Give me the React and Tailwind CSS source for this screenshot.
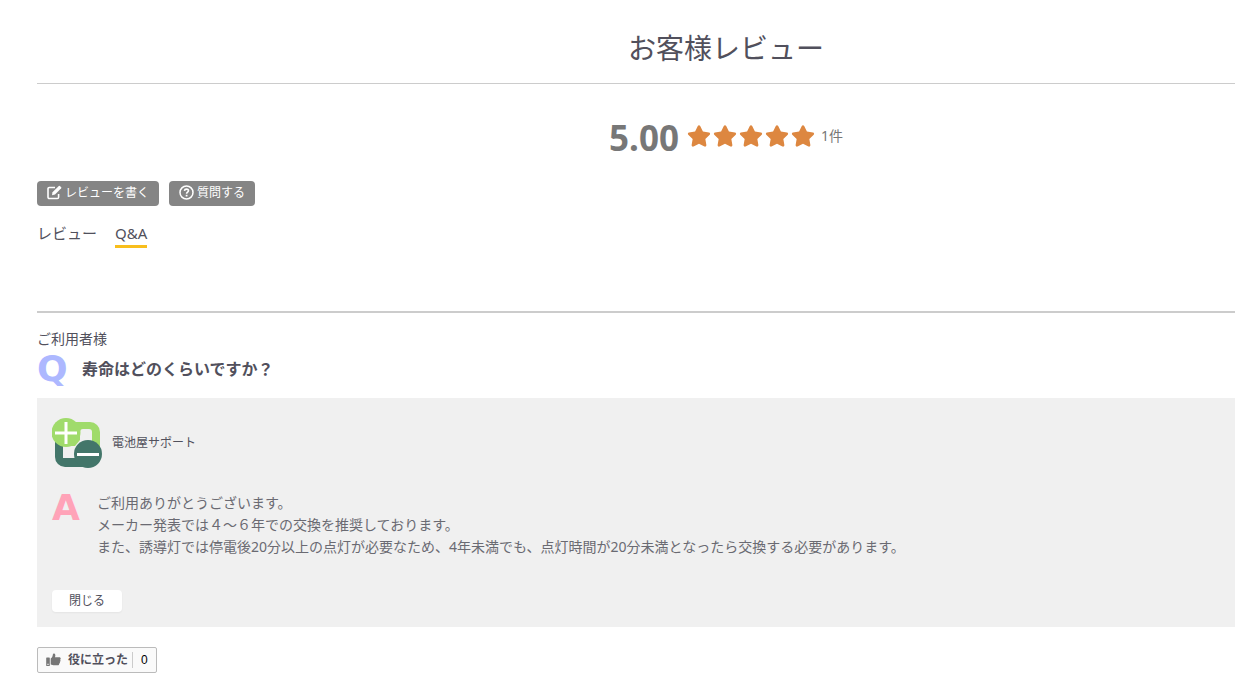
import { FaStar } from 'react-icons/fa';

const tabs = [
  { label: 'レビュー', href: '#review', active: false },
  { label: 'Q&A', href: '#qa', active: true },
];

const answerLines = [
  'ご利用ありがとうございます。',
  'メーカー発表では４～６年での交換を推奨しております。',
  'また、誘導灯では停電後20分以上の点灯が必要なため、4年未満でも、点灯時間が20分未満となったら交換する必要があります。',
];

const EditIcon = () => (
  <svg viewBox="0 0 15 15" className="h-[15px] w-[15px]" fill="none" aria-hidden="true">
    <path d="M8 2.5H2.300a1.300 1.300 0 0 0-1.300 1.300v8.400a1.300 1.300 0 0 0 1.300 1.300h8a1.300 1.300 0 0 0 1.300-1.300V9" stroke="currentColor" strokeWidth="1.600" />
    <path d="M5 10.2l.5-3L11.8.9a.8.8 0 0 1 1.100 0l1.300 1.300a.8.8 0 0 1 0 1.100L8 9.600z" fill="currentColor" />
  </svg>
);

const QuestionIcon = () => (
  <svg viewBox="0 0 15 15" className="h-[15px] w-[15px]" fill="none" aria-hidden="true">
    <circle cx="7.5" cy="7.5" r="6.5" stroke="currentColor" strokeWidth="1.5" />
    <path d="M5.4 5.9c.2-1.2 1-1.8 2.1-1.8s2 .7 2 1.7c0 1.4-1.9 1.4-1.9 2.9" stroke="currentColor" strokeWidth="1.6" />
    <path d="M6.7 9.8h1.8v1.7H6.7z" fill="currentColor" />
  </svg>
);

const ThumbIcon = () => (
  <svg viewBox="0 0 15 14" className="h-[14px] w-[15px] text-[#777]" fill="currentColor" aria-hidden="true">
    <path fillRule="evenodd" d="M.8 4.5h2.4a.6.6 0 0 1 .6.6v7.3a.6.6 0 0 1-.6.6H.8a.6.6 0 0 1-.6-.6V5.1a.6.6 0 0 1 .6-.6zM1.4 10.7v1.2h1.2v-1.2z" />
    <path d="M4.700 5.500C6.200 4.700 6.500 3.500 6.800 1.700 7 .7 7.500.4 8.200.6c1.300.4 1.400 2 .7 3.700h4.300c1.700 0 1.900 1.900.9 2.400.7.7.5 1.800-.3 2.100.4.8.1 1.600-.7 1.900.2.9-.3 1.600-1.400 1.600H8.500c-1.500 0-2.500-.6-3.800-.8z" />
  </svg>
);

const ShopIcon = () => (
  <svg viewBox="0 0 50 50" className="h-[50px] w-[50px]" aria-hidden="true">
    <path d="M14 4h24a10 10 0 0 1 10 10v20H14z" fill="#a0db6b" />
    <path d="M3 22h8v18h20v9H13a10 10 0 0 1-10-10z" fill="#43766a" />
    <path d="M28 14a3 3 0 0 1 3-3h6a3 3 0 0 1 3 3v18H28v8H14a3 3 0 0 1-3-3V28h12l5-6z" fill="#f0f0f0" />
    <circle cx="14" cy="14.5" r="14.5" fill="#a0db6b" />
    <circle cx="36" cy="36" r="14" fill="#43766a" />
    <path d="M14 4v22M3 15h22M25 36.5h22" stroke="#fff" strokeWidth="3" />
  </svg>
);

const ToolButton = ({ icon, children }) => (
  <button type="button" className="flex h-[25px] items-center gap-[3px] rounded-sm bg-[#858585] px-2.5 pb-0.5 text-xs text-white">
    {icon}
    {children}
  </button>
);

const Rating = () => (
  <div className="flex items-center justify-center pl-[180px] text-[#777]">
    <span className="mr-2 text-[35px] leading-10 font-bold">5.00</span>
    <div className="flex gap-0.5 pb-1" role="img" aria-label="5.00">
      {[1, 2, 3, 4, 5].map((n) => (
        <FaStar key={n} className="h-6 w-6 text-[#dd8740]" />
      ))}
    </div>
    <span className="ml-1.5 pb-1 text-sm">1件</span>
  </div>
);

const Answer = () => (
  <div className="bg-[#f0f0f0] px-[15px] pt-5 pb-[15px]">
    <div className="flex items-center gap-2.5">
      <ShopIcon />
      <span className="text-xs">電池屋サポート</span>
    </div>
    <div className="mt-5 flex">
      <span className="w-[45px] shrink-0 font-['DejaVu_Sans'] text-4xl leading-10 font-bold text-[#ffa3b8]">A</span>
      <div className="pt-1 text-sm leading-[22px] text-[#6a6a72]">
        {answerLines.map((line) => (
          <p key={line}>{line}</p>
        ))}
      </div>
    </div>
    <button type="button" className="mt-8 h-[22px] w-[70px] rounded-sm bg-white text-xs shadow-xs">
      閉じる
    </button>
  </div>
);

const App = () => {
  return (
    <main className="overflow-hidden bg-white pt-7 pb-6 pl-[37px] font-['Noto_Sans','Noto_Sans_CJK_JP',sans-serif] text-[#51505c]">
      <h2 className="border-b border-[#ccc] pb-[15px] pl-[180px] text-center text-[28px] leading-10">お客様レビュー</h2>

      <div className="pt-[34px]">
        <Rating />
      </div>

      <div className="mt-[23px] flex gap-2.5">
        <ToolButton icon={<EditIcon />}>レビューを書く</ToolButton>
        <ToolButton icon={<QuestionIcon />}>質問する</ToolButton>
      </div>

      <nav className="mt-4 flex gap-[18px] text-[15px] leading-[23px]">
        {tabs.map((tab) => (
          <a
            key={tab.label}
            href={tab.href}
            className={tab.active ? 'border-b-[3px] border-[#f8be1c]' : 'border-b-[3px] border-transparent'}
          >
            {tab.label}
          </a>
        ))}
      </nav>

      <section className="mt-[63px] border-t-2 border-[#ccc] pt-4">
        <p className="text-sm leading-5">ご利用者様</p>
        <div className="mb-[9px] flex items-center">
          <span className="w-[45px] shrink-0 font-['DejaVu_Sans'] text-4xl leading-10 font-bold text-[#adb8ff]">Q</span>
          <h3 className="text-base font-bold">寿命はどのくらいですか？</h3>
        </div>
        <Answer />
        <button type="button" className="mt-5 flex h-[26px] items-center rounded-xs border border-[#bbb] bg-[#fafafa] px-2 text-xs font-bold">
          <span className="mr-[7px]">
            <ThumbIcon />
          </span>
          役に立った
          <span className="ml-1 border-l border-[#ccc] pl-2 font-['Liberation_Sans'] font-medium text-black">0</span>
        </button>
      </section>
    </main>
  );
};

export default App;
